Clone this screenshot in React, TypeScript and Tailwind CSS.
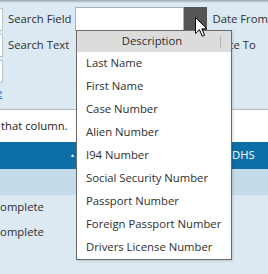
export default function App() {
  const options = [
    'Last Name',
    'First Name',
    'Case Number',
    'Alien Number',
    'I94 Number',
    'Social Security Number',
    'Passport Number',
    'Foreign Passport Number',
    'Drivers License Number',
  ]

  return (
    <div className="relative h-[274px] w-[268px] overflow-hidden bg-[#dce9f2] font-['Open_Sans',sans-serif] text-[11.3px] text-[#2e2e2e]">
      <div className="pointer-events-none absolute inset-x-0 top-0 h-[3px] bg-gradient-to-b from-[#9aa4ab] to-transparent" />

      {/* search form */}
      <div className="flex flex-col gap-[2px] pt-[7px]">
        <div className="flex h-[24px] items-center">
          <div className="h-[23px] w-[3px] border border-l-0 border-[#b9c3ca] bg-white" />
          <span className="ml-[5px] w-[68px]">Search Field</span>
          <div className="h-[24px] w-[110px] border border-[#a9b1b7] bg-white" />
          <div className="h-[24px] w-[23px] bg-[#555]" />
          <span className="ml-[6px] whitespace-nowrap">Date From</span>
        </div>
        <div className="flex h-[24px] items-center">
          <div className="h-[23px] w-[3px] border border-l-0 border-[#b9c3ca] bg-white" />
          <span className="ml-[5px] w-[68px]">Search Text</span>
          <div className="h-[24px] w-[133px] border border-[#a9b1b7] bg-white" />
          <span className="ml-[6px] whitespace-nowrap">Date To</span>
        </div>
        <div className="flex h-[24px] items-center">
          <div className="h-[23px] w-[3px] border border-l-0 border-[#b9c3ca] bg-white" />
        </div>
      </div>

      <div className="mt-[1px] h-[17px] leading-[17px]">
        <span className="-ml-[4px] text-[#1f6fc5] underline">e</span>
      </div>

      {/* notice */}
      <div className="mt-[8px] flex h-[33px] items-center border-t border-[#b4bcc2] bg-white">
        <span className="ml-[1px] text-[#222]">that column.</span>
      </div>

      {/* grid */}
      <div className="flex h-[27px] items-center bg-[#0e6ea6] text-white">
        <div className="flex w-[76px] justify-end pr-[1px]">
          <span className="text-[5px] leading-none">▲</span>
        </div>
        <span className="ml-[156px]">DHS</span>
      </div>
      <div className="h-[26px] bg-[#c4dbea]" />
      <div className="flex h-[25px] items-center">
        <span className="-ml-[7px]">Complete</span>
      </div>
      <div className="flex h-[25px] items-center">
        <span className="-ml-[7px]">Complete</span>
      </div>

      {/* dropdown list */}
      <div className="absolute left-[76px] top-[30px] w-[156px] border border-[#6a6a6a] bg-white shadow-[1px_1px_2px_rgba(0,0,0,0.15)]">
        <div className="relative flex h-[21px] items-center justify-center bg-[#dcdcdc] pr-[4px]">
          Description
          <div className="absolute left-[143px] top-[5px] h-[12px] w-px bg-[#b3b3b3]" />
        </div>
        {options.map((o) => (
          <div key={o} className="flex h-[23px] items-center pl-[9px]">
            {o}
          </div>
        ))}
      </div>

      {/* mouse pointer */}
      <svg className="absolute left-[195px] top-[17px]" width="13" height="21" viewBox="0 0 13 21">
        <path d="M0.5 0.5 L0.5 16.5 L4.5 12.7 L7.2 19.2 L9.6 18.2 L6.9 11.8 L12 11.8 Z" fill="white" stroke="black" strokeWidth="1" strokeLinejoin="miter" />
      </svg>
    </div>
  )
}
